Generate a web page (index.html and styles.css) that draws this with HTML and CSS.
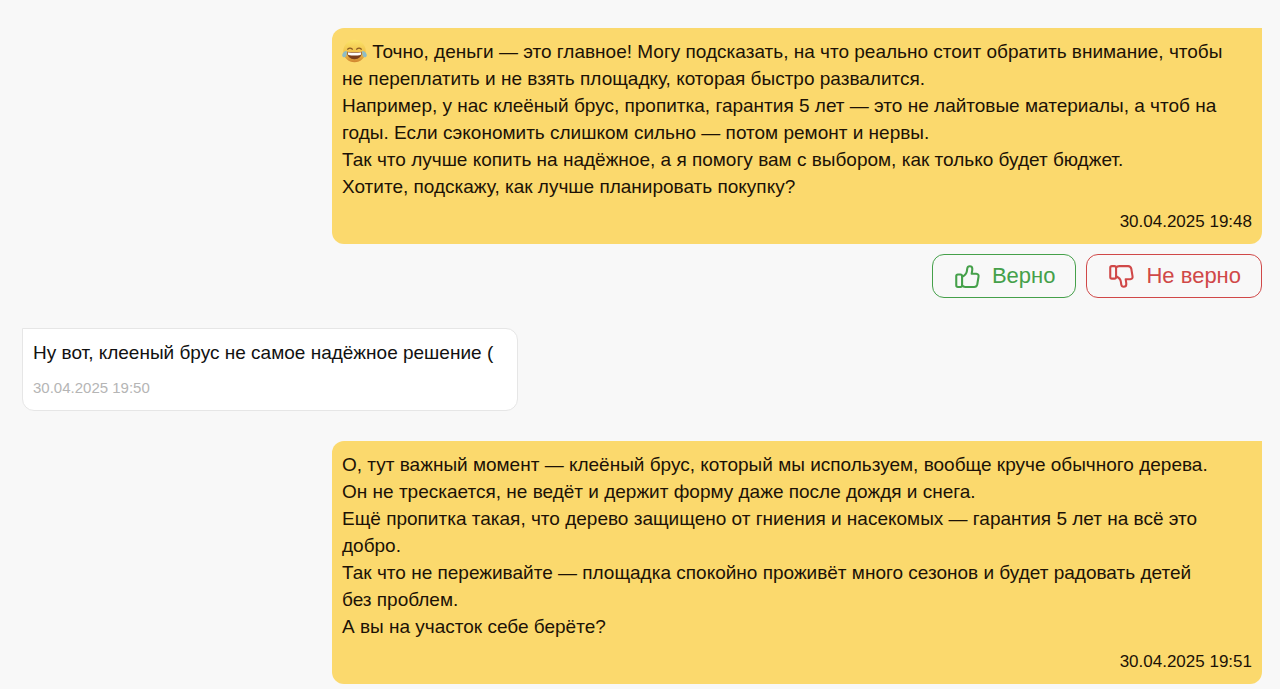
FILE: index.html
```
<!DOCTYPE html>
<html lang="ru">
<head>
    <meta charset="UTF-8">
    <meta name="viewport" content="width=device-width, initial-scale=1.0">
    <title>Диалог</title>
    <link rel="stylesheet" href="styles.css">
</head>
<body>

<main class="chat">
    <div class="message message-bot">
        <div class="message-text">
            <p><svg class="emoji" viewBox="0 0 24 24" role="img" aria-label="Смех до слёз">
                <defs>
                    <linearGradient id="face" x1="0" y1="0" x2="0" y2="1">
                        <stop offset="0" stop-color="#fbe46a"/>
                        <stop offset="0.6" stop-color="#f0bf48"/>
                        <stop offset="1" stop-color="#cf8430"/>
                    </linearGradient>
                </defs>
                <circle cx="12" cy="11.6" r="10.8" fill="url(#face)"/>
                <path d="M5.4 9.8 Q7.6 7.6 10 9.8 M14 9.8 Q16.4 7.6 18.6 9.8" fill="none" stroke="#8a5a22" stroke-width="1.2" stroke-linecap="round"/>
                <path d="M4.8 12.2 Q12 13.4 19.2 12.2 Q18.8 19.4 12 19.4 Q5.2 19.4 4.8 12.2Z" fill="#7a3f1c"/>
                <path d="M5.4 12.8 Q12 13.8 18.6 12.8 L18 15.4 Q12 16.4 6 15.4Z" fill="#fff"/>
                <path d="M4.6 11.6 C2.4 11.6 0.2 13.6 0.2 15.8 C0.4 18 3.2 18 4 16.2 Q4.6 14.4 4.6 11.6Z" fill="#8dbcc6"/>
                <path d="M19.4 11.6 C21.6 11.6 23.8 13.6 23.8 15.8 C23.6 18 20.8 18 20 16.2 Q19.4 14.4 19.4 11.6Z" fill="#8dbcc6"/>
            </svg> Точно, деньги — это главное! Могу подсказать, на что реально стоит обратить внимание, чтобы<br>
            не переплатить и не взять площадку, которая быстро развалится.</p>
            <p>Например, у нас клеёный брус, пропитка, гарантия 5 лет — это не лайтовые материалы, а чтоб на<br>
            годы. Если сэкономить слишком сильно — потом ремонт и нервы.</p>
            <p>Так что лучше копить на надёжное, а я помогу вам с выбором, как только будет бюджет.</p>
            <p>Хотите, подскажу, как лучше планировать покупку?</p>
        </div>
        <time class="message-time" datetime="2025-04-30T19:48">30.04.2025 19:48</time>
    </div>

    <div class="feedback">
        <button type="button" class="btn btn-right">
            <svg class="btn-icon" viewBox="0 0 24 24" aria-hidden="true">
                <rect x="1.2" y="10" width="5.6" height="12" rx="1.6"/>
                <path d="M6.8 12.2C9.2 11.2 11 9.6 11.4 6.8L11.8 4.2C12.2 1.4 16.4 1.4 16.6 4.4C16.7 6.2 16.2 7.8 16 9.4H20.4Q23 9.6 22.6 12.2L21.4 19.4Q20.8 22 18.4 22H9.8Q7.8 22 6.8 20.6"/>
            </svg>
            Верно
        </button>
        <button type="button" class="btn btn-wrong">
            <svg class="btn-icon" viewBox="0 0 24 24" aria-hidden="true">
                <rect x="1.2" y="2" width="5.6" height="12" rx="1.6"/>
                <path d="M6.8 11.8C9.2 12.8 11 14.4 11.4 17.2L11.8 19.8C12.2 22.6 16.4 22.6 16.6 19.6C16.7 17.8 16.2 16.2 16 14.6H20.4Q23 14.4 22.6 11.8L21.4 4.6Q20.8 2 18.4 2H9.8Q7.8 2 6.8 3.4"/>
            </svg>
            Не верно
        </button>
    </div>

    <div class="message message-user">
        <div class="message-text">
            <p>Ну вот, клееный брус не самое надёжное решение (</p>
        </div>
        <time class="message-time" datetime="2025-04-30T19:50">30.04.2025 19:50</time>
    </div>

    <div class="message message-bot">
        <div class="message-text">
            <p>О, тут важный момент — клеёный брус, который мы используем, вообще круче обычного дерева.<br>
            Он не трескается, не ведёт и держит форму даже после дождя и снега.</p>
            <p>Ещё пропитка такая, что дерево защищено от гниения и насекомых — гарантия 5 лет на всё это<br>
            добро.</p>
            <p>Так что не переживайте — площадка спокойно проживёт много сезонов и будет радовать детей<br>
            без проблем.</p>
            <p>А вы на участок себе берёте?</p>
        </div>
        <time class="message-time" datetime="2025-04-30T19:51">30.04.2025 19:51</time>
    </div>
</main>

</body>
</html>
```
FILE: styles.css
```
* {
    box-sizing: border-box;
    margin: 0;
    padding: 0;
}
body {
    font-family: "Liberation Sans", Arial, sans-serif;
    background-color: #f8f8f8;
    color: #111;
}
.chat {
    display: flex;
    flex-direction: column;
    padding: 28px 18px 5px 22px;
}
.message {
    display: flex;
    flex-direction: column;
    gap: 10px;
    padding: 10px;
}
.message-text {
    font-size: 19px;
    line-height: 27px;
}
.message-time {
    font-size: 17px;
    line-height: 24px;
}
.message-bot {
    align-self: flex-end;
    width: 75%;
    background-color: #fbd96d;
    border-radius: 12px 0 12px 12px;
    color: #1c1206;
}
.message-bot .message-time {
    text-align: right;
}
.message-user {
    align-self: flex-start;
    min-width: 40%;
    max-width: 75%;
    margin: 30px 0;
    background-color: #fff;
    border: 1px solid #e6e6e6;
    border-radius: 0 12px 12px 12px;
}
.message-user .message-time {
    font-size: 15px;
    color: #b5b5b5;
}
.emoji {
    width: 25px;
    height: 25px;
    vertical-align: -6px;
}
.feedback {
    display: flex;
    justify-content: flex-end;
    gap: 10px;
    margin-top: 10px;
}
.btn {
    display: flex;
    align-items: center;
    gap: 12px;
    height: 44px;
    padding: 0 20px 0 22px;
    background-color: transparent;
    border: 1px solid currentColor;
    border-radius: 12px;
    font-family: inherit;
    font-size: 22px;
    cursor: pointer;
}
.btn-right {
    color: #45a04a;
}
.btn-wrong {
    color: #d04848;
}
.btn-icon {
    width: 25px;
    height: 25px;
    fill: none;
    stroke: currentColor;
    stroke-width: 2;
    stroke-linecap: round;
    stroke-linejoin: round;
}
```
